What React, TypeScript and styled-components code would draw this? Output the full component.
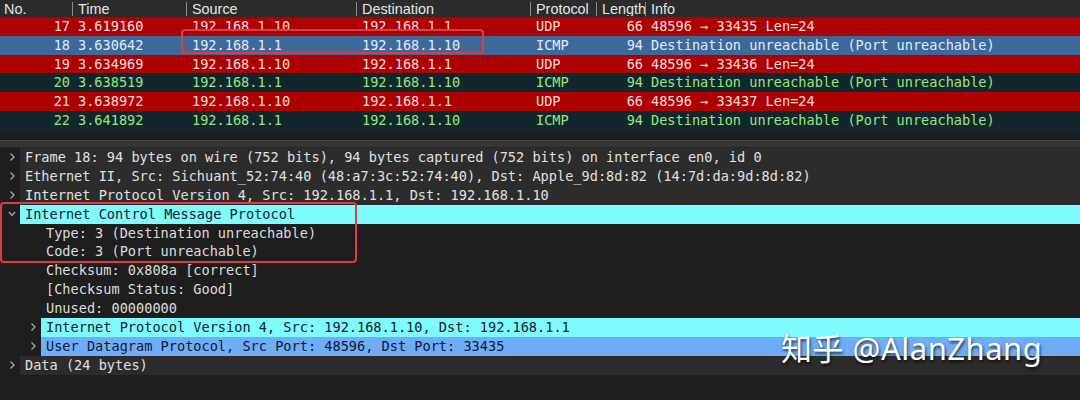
import styled, { createGlobalStyle } from 'styled-components';

type Kind = 'udp' | 'icmp' | 'selected';

type Packet = {
  no: number;
  time: string;
  src: string;
  dst: string;
  proto: string;
  len: number;
  info: string;
  kind: Kind;
};

type TreeItem = {
  level: number;
  text: string;
  arrow?: 'closed' | 'open';
  tone?: 'cyan' | 'blue' | 'top';
};

const UNREACH = 'Destination unreachable (Port unreachable)';

const packets: Packet[] = [
  { no: 17, time: '3.619160', src: '192.168.1.10', dst: '192.168.1.1', proto: 'UDP', len: 66, info: '48596 → 33435 Len=24', kind: 'udp' },
  { no: 18, time: '3.630642', src: '192.168.1.1', dst: '192.168.1.10', proto: 'ICMP', len: 94, info: UNREACH, kind: 'selected' },
  { no: 19, time: '3.634969', src: '192.168.1.10', dst: '192.168.1.1', proto: 'UDP', len: 66, info: '48596 → 33436 Len=24', kind: 'udp' },
  { no: 20, time: '3.638519', src: '192.168.1.1', dst: '192.168.1.10', proto: 'ICMP', len: 94, info: UNREACH, kind: 'icmp' },
  { no: 21, time: '3.638972', src: '192.168.1.10', dst: '192.168.1.1', proto: 'UDP', len: 66, info: '48596 → 33437 Len=24', kind: 'udp' },
  { no: 22, time: '3.641892', src: '192.168.1.1', dst: '192.168.1.10', proto: 'ICMP', len: 94, info: UNREACH, kind: 'icmp' },
];

const tree: TreeItem[] = [
  { level: 0, arrow: 'closed', tone: 'top', text: 'Frame 18: 94 bytes on wire (752 bits), 94 bytes captured (752 bits) on interface en0, id 0' },
  { level: 0, arrow: 'closed', tone: 'top', text: 'Ethernet II, Src: Sichuant_52:74:40 (48:a7:3c:52:74:40), Dst: Apple_9d:8d:82 (14:7d:da:9d:8d:82)' },
  { level: 0, arrow: 'closed', tone: 'top', text: 'Internet Protocol Version 4, Src: 192.168.1.1, Dst: 192.168.1.10' },
  { level: 0, arrow: 'open', tone: 'cyan', text: 'Internet Control Message Protocol' },
  { level: 1, text: 'Type: 3 (Destination unreachable)' },
  { level: 1, text: 'Code: 3 (Port unreachable)' },
  { level: 1, text: 'Checksum: 0x808a [correct]' },
  { level: 1, text: '[Checksum Status: Good]' },
  { level: 1, text: 'Unused: 00000000' },
  { level: 1, arrow: 'closed', tone: 'cyan', text: 'Internet Protocol Version 4, Src: 192.168.1.10, Dst: 192.168.1.1' },
  { level: 1, arrow: 'closed', tone: 'blue', text: 'User Datagram Protocol, Src Port: 48596, Dst Port: 33435' },
  { level: 0, arrow: 'closed', tone: 'top', text: 'Data (24 bytes)' },
];

const rowColors: Record<Kind, { bg: string; fg: string }> = {
  udp: { bg: '#ad0000', fg: '#ffdede' },
  selected: { bg: '#3d689a', fg: '#e0ecf8' },
  icmp: { bg: '#12262d', fg: '#93ea79' },
};

const toneColors = {
  top: { bg: '#2c2c2c', fg: '#e0e0e0' },
  cyan: { bg: '#7ffbff', fg: '#0c2424' },
  blue: { bg: '#6fadf9', fg: '#0a1a30' },
};

const GlobalStyle = createGlobalStyle`
  html, body {
    margin: 0;
    padding: 0;
    background: #1e1e1e;
  }
  body {
    width: 1080px;
    height: 400px;
    overflow: hidden;
  }
`;

const Chevron = ({ open }: { open?: boolean }) => (
  <svg width="8" height="10" viewBox="0 0 8 10">
    {open ? (
      <path d="M1 3 L4 6.5 L7 3" fill="none" stroke="#a8a8a8" strokeWidth="1.3" />
    ) : (
      <path d="M2.5 1.5 L6 5 L2.5 8.5" fill="none" stroke="#a8a8a8" strokeWidth="1.3" />
    )}
  </svg>
);

export default function App() {
  return (
    <>
      <GlobalStyle />
      <Screen>
        <ListPane>
          <Header>
            <HeadCell>No.</HeadCell>
            <HeadCell $divider>Time</HeadCell>
            <HeadCell $divider>Source</HeadCell>
            <HeadCell $divider>Destination</HeadCell>
            <HeadCell $divider>Protocol</HeadCell>
            <HeadCell $divider>Length</HeadCell>
            <HeadCell $divider>Info</HeadCell>
          </Header>
          {packets.map(p => (
            <PacketRow key={p.no} $kind={p.kind}>
              <Cell $right>{p.no}</Cell>
              <Cell>{p.time}</Cell>
              <Cell>{p.src}</Cell>
              <Cell>{p.dst}</Cell>
              <Cell>{p.proto}</Cell>
              <Cell $right>{p.len}</Cell>
              <Cell>{p.info}</Cell>
            </PacketRow>
          ))}
          <Mark style={{ left: 181, top: 29, width: 303, height: 25 }} />
        </ListPane>

        <Splitter />

        <DetailPane>
          {tree.map((item, i) => (
            <TreeRow key={i} $level={item.level}>
              <ArrowSlot>{item.arrow && <Chevron open={item.arrow === 'open'} />}</ArrowSlot>
              <Label $tone={item.tone}>{item.text}</Label>
            </TreeRow>
          ))}
          <Mark style={{ left: 0, top: 54, width: 357, height: 61 }} />
          <Watermark>知乎 @AlanZhang</Watermark>
        </DetailPane>
      </Screen>
    </>
  );
}

const Screen = styled.div`
  width: 1080px;
  height: 400px;
  display: flex;
  flex-direction: column;
  background: #1e1e1e;
  font-family: 'DejaVu Sans Mono', 'Liberation Mono', monospace;
  font-size: 13.6px;
`;

const ListPane = styled.div`
  position: relative;
  height: 140px;
  background: #1c1f21;
`;

const columns = '72px 114px 170px 174px 66px 49px 1fr';

const Header = styled.div`
  display: grid;
  grid-template-columns: ${columns};
  height: 17px;
  background: #2b2b2b;
  font-family: 'Liberation Sans', Arial, sans-serif;
  font-size: 14.4px;
  color: #e6e6e6;
`;

const HeadCell = styled.div<{ $divider?: boolean }>`
  display: flex;
  align-items: center;
  padding-left: ${p => (p.$divider ? 5 : 4)}px;
  border-left: ${p => (p.$divider ? '1px solid #8a8a8a' : 'none')};
  margin: 2px 0 1px;
  line-height: 14px;
  white-space: nowrap;
  overflow: hidden;
`;

const PacketRow = styled.div<{ $kind: Kind }>`
  display: grid;
  grid-template-columns: ${columns};
  height: 18.8px;
  line-height: 18.8px;
  background: ${p => rowColors[p.$kind].bg};
  color: ${p => rowColors[p.$kind].fg};
`;

const Cell = styled.div<{ $right?: boolean }>`
  padding: ${p => (p.$right ? '0 2px 0 0' : '0 0 0 6px')};
  text-align: ${p => (p.$right ? 'right' : 'left')};
  white-space: nowrap;
  overflow: hidden;
`;

const Splitter = styled.div`
  height: 6px;
  background: #353535;
  border-top: 1px solid #454545;
  border-bottom: 1px solid #262626;
`;

const DetailPane = styled.div`
  position: relative;
  flex: 1;
  background: #1e1e1e;
`;

const TreeRow = styled.div<{ $level: number }>`
  display: flex;
  align-items: stretch;
  height: 18.9px;
  padding-left: ${p => 4 + p.$level * 21}px;
`;

const ArrowSlot = styled.div`
  width: 16px;
  display: flex;
  align-items: center;
  justify-content: center;
`;

const Label = styled.div<{ $tone?: 'cyan' | 'blue' | 'top' }>`
  flex: 1;
  padding-left: 5px;
  line-height: 18.9px;
  white-space: nowrap;
  overflow: hidden;
  background: ${p => (p.$tone ? toneColors[p.$tone].bg : 'transparent')};
  color: ${p => (p.$tone ? toneColors[p.$tone].fg : '#dcdcdc')};
`;

const Mark = styled.div`
  position: absolute;
  box-sizing: border-box;
  border: 2px solid #e03a46;
  border-radius: 4px;
  pointer-events: none;
`;

const Watermark = styled.div`
  position: absolute;
  left: 781px;
  top: 176px;
  font-family: 'Noto Sans', 'Noto Sans CJK SC', sans-serif;
  font-size: 31px;
  color: #ffffff;
  letter-spacing: 0.5px;
  text-shadow: 1px 2px 3px rgba(0, 0, 0, 0.7);
  white-space: nowrap;
`;
